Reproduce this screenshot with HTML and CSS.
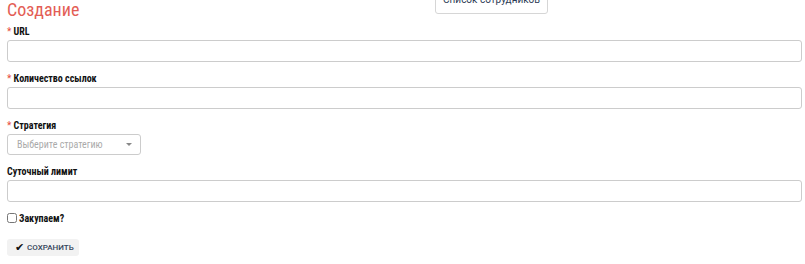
FILE: index.html
```html
<!DOCTYPE html>
<html lang="ru">
<head>
    <meta charset="UTF-8">
    <title>Создание</title>
    <link rel="stylesheet" href="styles.css">
</head>
<body>
    <div class="page">
        <div class="head">
            <h1 class="title">Создание</h1>
            <button class="btn-top">Список сотрудников</button>
        </div>

        <form class="form">
            <div class="field">
                <label class="label"><span class="req">*</span> URL</label>
                <input type="text" class="input">
            </div>
            <div class="field">
                <label class="label"><span class="req">*</span> Количество ссылок</label>
                <input type="text" class="input">
            </div>
            <div class="field">
                <label class="label"><span class="req">*</span> Стратегия</label>
                <div class="select">
                    <span class="placeholder">Выберите стратегию</span>
                    <span class="caret"></span>
                </div>
            </div>
            <div class="field">
                <label class="label">Суточный лимит</label>
                <input type="text" class="input">
            </div>
            <label class="check">
                <input type="checkbox" class="checkbox">
                <span>Закупаем?</span>
            </label>
            <div class="actions">
                <button type="button" class="btn-save"><span class="tick">✔</span> Сохранить</button>
            </div>
        </form>
    </div>
</body>
</html>
```

FILE: styles.css
```css
body {
    margin: 0;
    font-family: Roboto, "Liberation Sans", sans-serif;
    font-stretch: 86%;
    background: #fff;
    color: #222;
}
.page {
    padding: 0 3px 0 7px;
}
.head {
    display: flex;
    align-items: flex-end;
    margin-top: -17px;
}
.title {
    margin: 0;
    width: 428px;
    font-size: 18px;
    font-weight: 400;
    line-height: 20px;
    color: #e35d55;
    position: relative;
    top: 2px;
}
.btn-top {
    height: 31px;
    width: 113px;
    margin-bottom: 4px;
    padding: 0 0 8px;
    font-family: inherit;
    font-stretch: 94%;
    font-size: 10px;
    white-space: nowrap;
    color: #2d3b55;
    background: #fff;
    border: 1px solid #d6d6d6;
    border-radius: 3px;
    display: flex;
    align-items: flex-end;
    justify-content: center;
}
.form {
    margin-top: 7px;
}
.field {
    margin-bottom: 10px;
}
.label {
    display: block;
    font-size: 10px;
    font-weight: 700;
    line-height: 13px;
    margin-bottom: 2px;
    color: #111;
}
.req {
    color: #e74c3c;
    font-weight: 400;
}
.input {
    display: block;
    box-sizing: border-box;
    width: 100%;
    height: 22px;
    border: 1px solid #ccc;
    border-radius: 3px;
    margin: 0;
}
.select {
    box-sizing: border-box;
    width: 134px;
    height: 21px;
    margin-top: 1px;
    border: 1px solid #ccc;
    border-radius: 3px;
    display: flex;
    align-items: center;
    justify-content: space-between;
    padding: 0 8px 0 9px;
}
.placeholder {
    font-size: 10px;
    color: #aaa;
}
.caret {
    width: 0;
    height: 0;
    border-left: 3px solid transparent;
    border-right: 3px solid transparent;
    border-top: 3px solid #888;
}
.check {
    display: flex;
    align-items: center;
    gap: 2px;
    height: 12px;
    margin-top: 1px;
    font-size: 10px;
    font-weight: 700;
    color: #111;
}
.checkbox {
    margin: 0;
    width: 10px;
    height: 10px;
}
.actions {
    margin-top: 15px;
}
.btn-save {
    height: 17px;
    width: 72px;
    padding: 0 0 0 8px;
    border: 0;
    border-radius: 3px;
    background: #f2f2f2;
    color: #34445a;
    font-family: inherit;
    font-stretch: 100%;
    font-size: 8px;
    font-weight: 500;
    text-transform: uppercase;
    display: flex;
    align-items: center;
    gap: 3px;
}
.tick {
    color: #111;
    font-size: 11px;
}
```
